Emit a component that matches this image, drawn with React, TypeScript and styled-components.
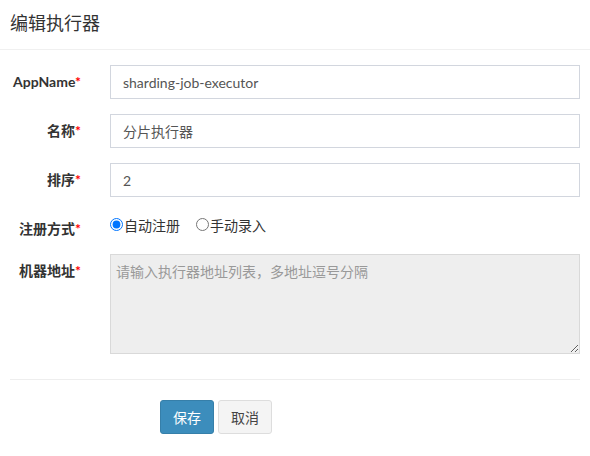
import React from "react";
import styled, { createGlobalStyle } from "styled-components";

const Global = createGlobalStyle`
  html, body { margin: 0; padding: 0; background: #fff; }
  body {
    font-family: "Lato", "Noto Sans CJK SC", sans-serif;
    font-size: 14px;
    color: #333;
  }
  * { box-sizing: border-box; }
`;

const Modal = styled.div`
  width: 590px;
  background: #fff;
`;

const Header = styled.div`
  height: 50px;
  padding: 9px 10px 0;
  border-bottom: 1px solid #f0f0f0;
`;

const Title = styled.h4`
  margin: 0;
  font-size: 18px;
  line-height: 26px;
  font-weight: 400;
  color: #333;
  font-family: "Noto Sans CJK SC", sans-serif;
`;

const Form = styled.form`
  padding: 15px 10px 0 0;
`;

const Row = styled.div<{ $h?: number }>`
  display: grid;
  grid-template-columns: 95px 1fr;
  column-gap: 15px;
  margin-bottom: 15px;
  min-height: ${(p) => (p.$h ? `${p.$h}px` : "auto")};
`;

const Label = styled.label`
  text-align: right;
  padding: 7px 14px 0 0;
  font-weight: 700;
  font-size: 14px;
  line-height: 20px;
  color: #333;
  white-space: nowrap;
`;

const Star = styled.span`
  color: #f00;
`;

const Input = styled.input`
  width: 100%;
  height: 34px;
  border: 1px solid #d2d6de;
  padding: 6px 12px;
  font-family: "Lato", "Noto Sans CJK SC", sans-serif;
  font-size: 14px;
  color: #555;
  outline: none;
  border-radius: 0;
`;

const TextArea = styled.textarea`
  width: 100%;
  height: 100px;
  border: 1px solid #d9d9d9;
  background: #eee;
  padding: 6px 5px;
  font-family: "Noto Sans CJK SC", sans-serif;
  font-size: 14px;
  line-height: 20px;
  color: #555;
  outline: none;
  display: block;
  border-radius: 0;
  &::placeholder { color: #999; }
`;

const Radios = styled.div`
  display: flex;
  align-items: center;
  padding-top: 3px;
  height: 20px;
  margin-top: 1px;
`;

const RadioLabel = styled.label<{ $first?: boolean }>`
  display: inline-flex;
  align-items: center;
  margin-left: ${(p) => (p.$first ? 0 : 16)}px;
  font-family: "Noto Sans CJK SC", sans-serif;
  font-size: 14px;
  color: #333;
  input { margin: 0 1px 0 0; width: 13px; height: 13px; }
`;

const Divider = styled.div`
  margin: 25px 0 20px 10px;
  border-top: 1px solid #eee;
`;

const Buttons = styled.div`
  display: flex;
  gap: 4px;
  padding-left: 160px;
`;

const Button = styled.button<{ $primary?: boolean }>`
  width: 54px;
  height: 34px;
  border-radius: 3px;
  font-family: "Noto Sans CJK SC", sans-serif;
  font-size: 14px;
  padding: 0;
  cursor: pointer;
  background: ${(p) => (p.$primary ? "#3c8dbc" : "#f4f4f4")};
  border: 1px solid ${(p) => (p.$primary ? "#367fa9" : "#ddd")};
  color: ${(p) => (p.$primary ? "#fff" : "#444")};
`;

export default function App() {
  return (
    <Modal>
      <Global />
      <Header>
        <Title>编辑执行器</Title>
      </Header>
      <Form onSubmit={(e) => e.preventDefault()}>
        <Row>
          <Label>AppName<Star>*</Star></Label>
          <Input defaultValue="sharding-job-executor" />
        </Row>
        <Row>
          <Label>名称<Star>*</Star></Label>
          <Input defaultValue="分片执行器" />
        </Row>
        <Row>
          <Label>排序<Star>*</Star></Label>
          <Input defaultValue="2" />
        </Row>
        <Row $h={27}>
          <Label>注册方式<Star>*</Star></Label>
          <Radios>
            <RadioLabel $first>
              <input type="radio" name="addressType" defaultChecked />自动注册
            </RadioLabel>
            <RadioLabel>
              <input type="radio" name="addressType" />手动录入
            </RadioLabel>
          </Radios>
        </Row>
        <Row>
          <Label>机器地址<Star>*</Star></Label>
          <TextArea readOnly placeholder="请输入执行器地址列表，多地址逗号分隔" />
        </Row>
        <Divider />
        <Buttons>
          <Button $primary type="submit">保存</Button>
          <Button type="button">取消</Button>
        </Buttons>
      </Form>
    </Modal>
  );
}
